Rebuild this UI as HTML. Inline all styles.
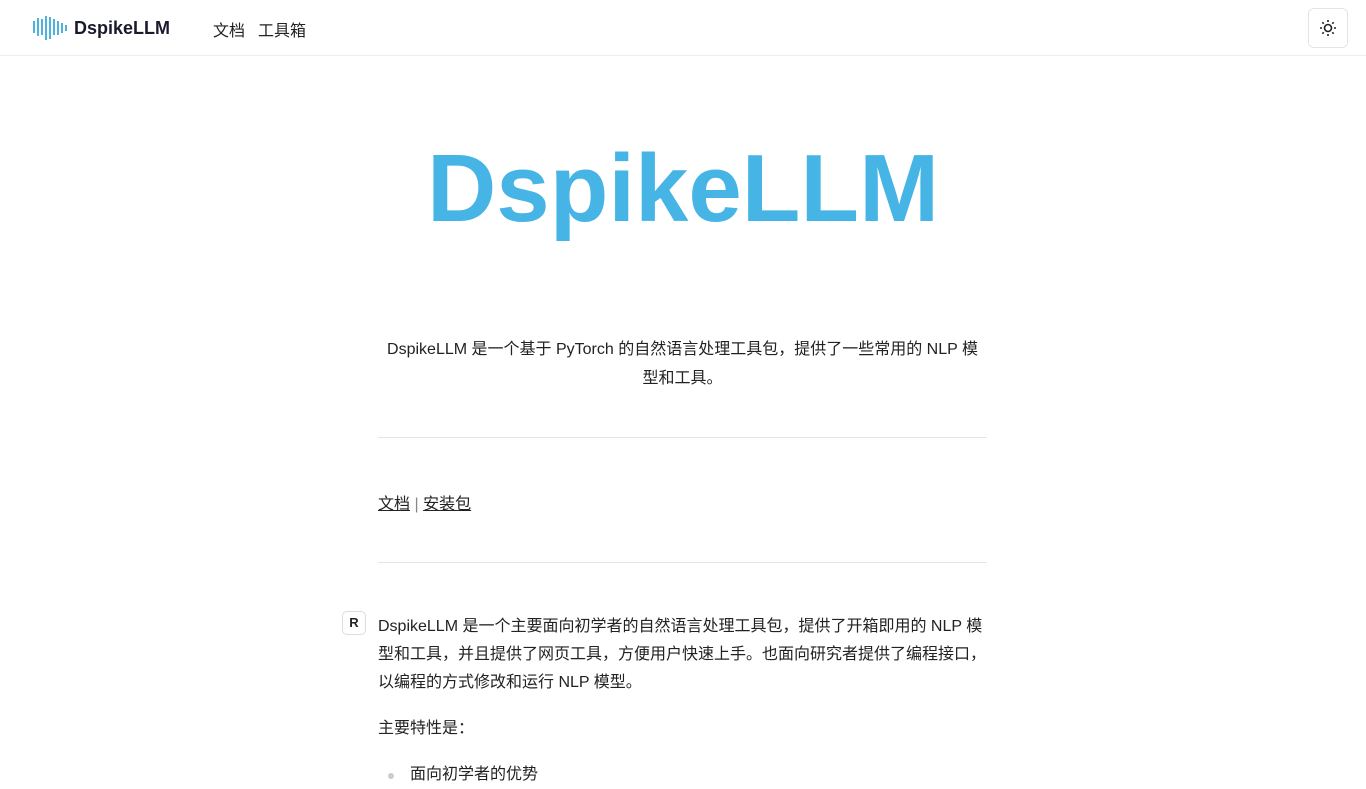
<!DOCTYPE html>
<html><head><meta charset="utf-8"><style>
*{margin:0;padding:0;box-sizing:border-box}
body{width:1366px;height:779px;overflow:hidden;background:#fff;font-family:"Liberation Sans","Noto Sans CJK SC",sans-serif;color:#222}
.nav{height:56px;border-bottom:1px solid #eee;position:relative}
.logo{position:absolute;left:32px;top:13px;display:flex;align-items:center}
.brand{position:absolute;left:74px;top:18px;font-size:18px;font-weight:bold;color:#1a1a2e}
.links{position:absolute;left:213px;top:17px;font-size:16px;color:#222}
.links span{margin-right:13px}
.btn{position:absolute;left:1308px;top:8px;width:40px;height:40px;border:1px solid #e5e5e5;border-radius:6px;display:flex;align-items:center;justify-content:center}
.title{position:absolute;left:0;width:1366px;top:134px;text-align:center;font-size:96px;font-weight:bold;color:#46b5e5}
.col{position:absolute;left:378px;width:609px}
.desc{top:335px;text-align:center;font-size:16px;line-height:29px;padding:0 6px}
hr{border:0;border-top:1px solid #e5e5e5}
.ln{top:490px;font-size:16px}
.ln a{color:#222;text-decoration:underline}
.p{top:613px;font-size:16px;line-height:28px}
.r{position:absolute;left:342px;top:611px;width:24px;height:24px;border:1px solid #ddd;border-radius:5px;font-size:13px;font-weight:bold;text-align:center;line-height:22px;color:#222}
</style></head><body>
<div class="nav">
<div class="logo"><svg width="36" height="30" viewBox="0 0 36 30" fill="none" stroke="#4fb3e0" stroke-width="2"><path d="M2 8v12M6 5v18M10 6v16M14 3v24M18 4v22M22 6v16M26 8v14M30 10v10M34 12v6"/></svg></div>
<div class="brand">DspikeLLM</div>
<div class="links"><span>文档</span><span>工具箱</span></div>
<div class="btn"><svg width="20" height="20" viewBox="0 0 20 20" stroke="#222" stroke-width="1.6" fill="none"><circle cx="10" cy="10" r="3.5"/><path d="M10 2v2M10 16v2M2 10h2M16 10h2M4.3 4.3l1.4 1.4M14.3 14.3l1.4 1.4M4.3 15.7l1.4-1.4M14.3 5.7l1.4-1.4"/></svg></div>
</div>
<div class="title">DspikeLLM</div>
<div class="col desc">DspikeLLM 是一个基于 PyTorch 的自然语言处理工具包，提供了一些常用的 NLP 模型和工具。</div>
<hr class="col" style="top:437px">
<div class="col ln"><a>文档</a> <span style="color:#888">|</span> <a>安装包</a></div>
<hr class="col" style="top:562px">
<div class="r">R</div>
<div class="col p">DspikeLLM 是一个主要面向初学者的自然语言处理工具包，提供了开箱即用的 NLP 模型和工具，并且提供了网页工具，方便用户快速上手。也面向研究者提供了编程接口，以编程的方式修改和运行 NLP 模型。<div style="margin-top:18px">主要特性是：</div><div style="margin-top:18px;padding-left:32px;position:relative"><span style="position:absolute;left:10px;top:12px;width:6px;height:6px;border-radius:3px;background:#ccc"></span>面向初学者的优势</div></div>
</body></html>
